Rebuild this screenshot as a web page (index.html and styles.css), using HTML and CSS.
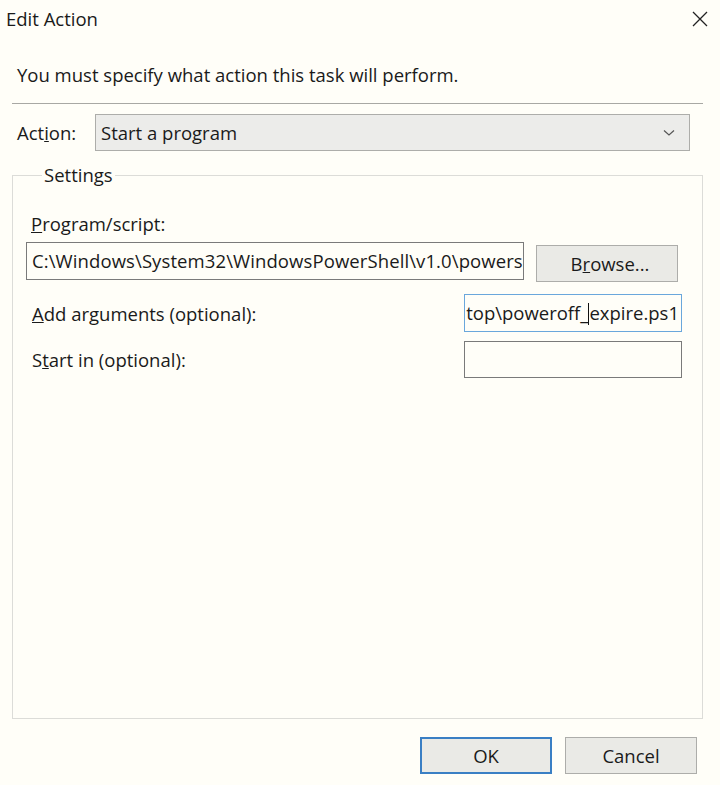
FILE: index.html
```html
<!DOCTYPE html>
<html lang="en">
<head>
  <meta charset="UTF-8">
  <title>Edit Action</title>
  <link rel="stylesheet" href="styles.css">
</head>
<body>
<div class="dialog">

  <div class="titlebar">
    <span class="title">Edit Action</span>
    <svg class="close" width="18" height="18" viewBox="0 0 18 18">
      <path d="M2 2 L16 16 M16 2 L2 16" stroke="#222" stroke-width="1.3" fill="none"/>
    </svg>
  </div>

  <p class="intro">You must specify what action this task will perform.</p>
  <div class="separator"></div>

  <div class="action-row">
    <label class="action-label">Act<u>i</u>on:</label>
    <div class="select">
      <span>Start a program</span>
      <svg width="12" height="8" viewBox="0 0 12 8">
        <path d="M1 1.5 L6 6 L11 1.5" stroke="#555" stroke-width="1.2" fill="none"/>
      </svg>
    </div>
  </div>

  <fieldset class="settings">
    <legend>Settings</legend>

    <label class="field-label"><u>P</u>rogram/script:</label>
    <div class="program-row">
      <div class="textbox program">C:\Windows\System32\WindowsPowerShell\v1.0\powers</div>
      <button class="btn browse">B<u>r</u>owse...</button>
    </div>

    <div class="arg-row">
      <label><u>A</u>dd arguments (optional):</label>
      <div class="textbox small focused">top\poweroff_<span class="caret"></span>expire.ps1</div>
    </div>

    <div class="arg-row">
      <label>S<u>t</u>art in (optional):</label>
      <div class="textbox small"></div>
    </div>
  </fieldset>

  <div class="footer">
    <button class="btn default">OK</button>
    <button class="btn">Cancel</button>
  </div>

</div>
</body>
</html>
```

FILE: styles.css
```css
body {
  margin: 0;
  background-color: #fffef8;
  font-family: "Open Sans", "Noto Sans", sans-serif;
  font-size: 18.5px;
  color: #1a1a1a;
}

.dialog {
  width: 720px;
  height: 785px;
}

/* title bar */
.titlebar {
  height: 37px;
  display: flex;
  justify-content: space-between;
  align-items: center;
  padding: 0 11px 0 6px;
}

.intro {
  margin: 26px 0 0 17px;
  line-height: 24px;
}
.separator {
  margin: 16px 17px 0 12px;
  border-top: 1px solid #a8a8a4;
}

/* Action: dropdown */
.action-row {
  display: flex;
  align-items: center;
  margin: 10px 30px 0 17px;
}
.action-label {
  width: 78px;
}
.select {
  flex: 1;
  height: 35px;
  display: flex;
  justify-content: space-between;
  align-items: center;
  padding: 0 14px 0 5px;
  background-color: #ececea;
  border: 1px solid #adadaa;
}

/* Settings group */
.settings {
  margin: 12px 17px 0 12px;
  height: 556px;
  border: 1px solid #dcdcd8;
  padding: 25px 19px 0 18px;
  box-sizing: border-box;
}
.settings legend {
  padding: 0 2px;
  margin-left: 11px;
  line-height: 24px;
}

.field-label {
  display: block;
  line-height: 24px;
}

.program-row {
  display: flex;
  align-items: flex-start;
  gap: 12px;
  margin-top: 6px;
}
.textbox {
  height: 38px;
  border: 1px solid #7a7a7a;
  background-color: #fffef8;
  box-sizing: border-box;
  line-height: 36px;
  padding: 0 4px;
  white-space: nowrap;
  overflow: hidden;
}
.program {
  flex: none;
  width: 498px;
  margin-left: -5px;
  padding-left: 5px;
  letter-spacing: 0.1px;
}

.arg-row {
  display: flex;
  justify-content: space-between;
  align-items: center;
  margin-top: 12px;
}
.arg-row + .arg-row {
  margin-top: 9px;
}
.arg-row label {
  padding-left: 1px;
}
.small {
  width: 218px;
  padding: 0 2px;
  margin-right: 1px;
  direction: rtl;
}
.arg-row + .arg-row .small {
  height: 37px;
}
.focused {
  border-color: #6aa7dc;
}
.caret {
  display: inline-block;
  width: 1px;
  height: 22px;
  background-color: #111;
  vertical-align: -5px;
}

/* buttons */
.btn {
  font-family: inherit;
  font-size: 18.5px;
  color: #1a1a1a;
  width: 132px;
  height: 37px;
  background-color: #eaeae6;
  border: 1px solid #adadaa;
  padding: 0;
}
.browse {
  width: 142px;
  margin-top: 3px;
  padding-left: 6px;
}
.footer {
  display: flex;
  justify-content: flex-end;
  gap: 13px;
  margin: 18px 23px 0 0;
}
.default {
  border: 2px solid #3a7fc4;
}
```
